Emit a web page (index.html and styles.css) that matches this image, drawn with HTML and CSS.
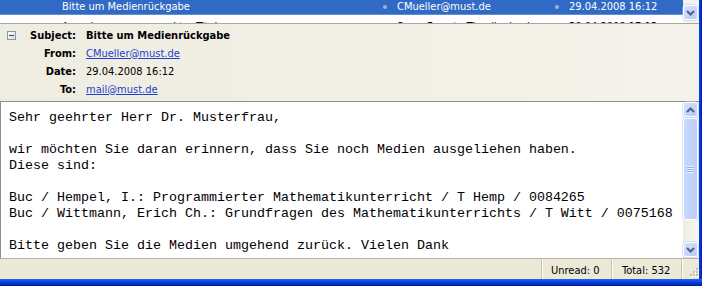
FILE: index.html
```html
<!DOCTYPE html>
<html>
<head>
<meta charset="utf-8">
<link rel="stylesheet" href="styles.css">
</head>
<body>
<div class="window">
  <div class="upper">
    <div class="main">
      <div class="list">
        <div class="rows">
          <div class="row selected">
            <span class="c-icon"></span>
            <span class="c-subj">Bitte um Medienrückgabe</span>
            <span class="c-dot"><i class="dot"></i></span>
            <span class="c-from">CMueller@must.de</span>
            <span class="c-dot"><i class="dot"></i></span>
            <span class="c-date">29.04.2008 16:12</span>
          </div>
          <div class="row next">
            <span class="c-icon"><i class="ring"></i></span>
            <span class="c-subj">Anmahnung vorgemerkter Titel</span>
            <span class="c-dot"></span>
            <span class="c-from">Swen Fuerste Tlandlnebach</span>
            <span class="c-dot"></span>
            <span class="c-date">30.04.2008 17:13</span>
          </div>
        </div>
        <div class="vscroll list-scroll">
          <div class="track"></div>
          <div class="sbtn"><svg width="9" height="6" viewBox="0 0 9 6"><polyline points="1,1 4.5,4.5 8,1" fill="none" stroke="#4D6185" stroke-width="2"/></svg></div>
        </div>
      </div>

      <div class="header">
        <div class="hdr-row">
          <span class="hdr-icon"><span class="collapse"></span></span>
          <span class="lbl">Subject:</span>
          <span class="val subj">Bitte um Medienrückgabe</span>
        </div>
        <div class="hdr-row">
          <span class="hdr-icon"></span>
          <span class="lbl">From:</span>
          <span class="val"><a class="link">CMueller@must.de</a></span>
        </div>
        <div class="hdr-row">
          <span class="hdr-icon"></span>
          <span class="lbl">Date:</span>
          <span class="val">29.04.2008 16:12</span>
        </div>
        <div class="hdr-row">
          <span class="hdr-icon"></span>
          <span class="lbl">To:</span>
          <span class="val"><a class="link">mail@must.de</a></span>
        </div>
      </div>

      <div class="reading">
        <div class="text">Sehr geehrter Herr Dr. Musterfrau,

wir möchten Sie daran erinnern, dass Sie noch Medien ausgeliehen haben.
Diese sind:

Buc / Hempel, I.: Programmierter Mathematikunterricht / T Hemp / 0084265
Buc / Wittmann, Erich Ch.: Grundfragen des Mathematikunterrichts / T Witt / 0075168

Bitte geben Sie die Medien umgehend zurück. Vielen Dank</div>
        <div class="vscroll">
          <div class="sbtn"><svg width="9" height="6" viewBox="0 0 9 6"><polyline points="1,5 4.5,1.5 8,5" fill="none" stroke="#4D6185" stroke-width="2"/></svg></div>
          <div class="thumb"><span class="grip"></span></div>
          <div class="track"></div>
          <div class="sbtn"><svg width="9" height="6" viewBox="0 0 9 6"><polyline points="1,1 4.5,4.5 8,1" fill="none" stroke="#4D6185" stroke-width="2"/></svg></div>
        </div>
      </div>

      <div class="status">
        <div class="panel wide"></div>
        <div class="panel unread">Unread: 0</div>
        <div class="panel total">Total: 532</div>
        <div class="grip-corner">
          <svg width="12" height="12" viewBox="0 0 12 12">
            <g fill="#FFFFFF">
              <rect x="10" y="2" width="2" height="2"/><rect x="7" y="5" width="2" height="2"/><rect x="10" y="5" width="2" height="2"/>
              <rect x="4" y="8" width="2" height="2"/><rect x="7" y="8" width="2" height="2"/><rect x="10" y="8" width="2" height="2"/>
            </g>
            <g fill="#C3BFAE">
              <rect x="9" y="1" width="2" height="2"/><rect x="6" y="4" width="2" height="2"/><rect x="9" y="4" width="2" height="2"/>
              <rect x="3" y="7" width="2" height="2"/><rect x="6" y="7" width="2" height="2"/><rect x="9" y="7" width="2" height="2"/>
            </g>
          </svg>
        </div>
      </div>
    </div>
    <div class="frame-right"></div>
  </div>
  <div class="frame-bottom"></div>
</div>
</body>
</html>
```

FILE: styles.css
```css
html, body {
  margin: 0;
  padding: 0;
  background: #ECE9D8;
}

.window {
  width: 702px;
  height: 286px;
  display: flex;
  flex-direction: column;
  overflow: hidden;
  font-family: "DejaVu Sans Condensed", "DejaVu Sans", sans-serif;
  font-size: 11px;
  color: #000;
}

.upper {
  flex: 1;
  display: flex;
  min-height: 0;
}

.main {
  flex: 1;
  display: flex;
  flex-direction: column;
  min-width: 0;
}

.frame-right {
  width: 3px;
  background: linear-gradient(to right, #0842DE, #0831D9 50%, #001EA0);
}

.frame-bottom {
  height: 7px;
  background: linear-gradient(to bottom, #1C6AF0, #0A4FE4 30%, #0831D9 60%, #001DA0);
}

/* message list */
.list {
  height: 23px;
  display: flex;
  background: #FFFFFF;
  border-bottom: 1px solid #ACA899;
  overflow: hidden;
}

.rows {
  flex: 1;
  min-width: 0;
  overflow: hidden;
}

.row {
  display: grid;
  grid-template-columns: 62px 316px 19px 153px 19px 1fr;
  height: 17px;
  line-height: 17px;
  white-space: nowrap;
  overflow: hidden;
}

.row.selected {
  margin-top: -2px;
  background: #316AC5;
  color: #FFFFFF;
  box-shadow: inset 0 -1px 0 0 rgba(255, 255, 255, 0.25);
}

.row.next {
  padding-top: 3px;
}

.c-dot {
  display: flex;
  align-items: center;
}

.dot {
  display: block;
  width: 4px;
  height: 4px;
  margin-left: 5px;
  border-radius: 50%;
  background: #9FB2D6;
}

.c-icon {
  display: flex;
  align-items: center;
}

.ring {
  display: block;
  width: 6px;
  height: 6px;
  margin-left: 29px;
  border: 1px solid #8C8C8C;
  border-radius: 50%;
}

/* scrollbars */
.vscroll {
  width: 16px;
  display: flex;
  flex-direction: column;
  background: #F4F3EE;
}

.list-scroll {
  padding-top: 2px;
}

.list-scroll .track {
  height: 3px;
  flex: 0 0 auto;
}

.track {
  flex: 1;
  background: linear-gradient(to right, #EEEDE5, #F8F8F4);
}

.sbtn {
  width: 15px;
  height: 15px;
  margin-bottom: 1px;
  box-sizing: border-box;
  border: 1px solid #FFFFFF;
  border-radius: 3px;
  background: linear-gradient(to bottom right, #D5E1FD, #B8CBF6);
  box-shadow: 0 0 0 0.5px #B0C4EF;
  display: flex;
  align-items: center;
  justify-content: center;
}

.thumb {
  width: 15px;
  height: 102px;
  box-sizing: border-box;
  border: 1px solid #FFFFFF;
  border-radius: 3px;
  background: linear-gradient(to right, #C9D8FC, #BCCDF8);
  box-shadow: 0 0 0 0.5px #B0C4EF;
  display: flex;
  align-items: center;
  justify-content: center;
}

.grip {
  display: block;
  width: 7px;
  height: 7px;
  background: repeating-linear-gradient(to bottom, #EEF4FE 0 1px, #8CB0F8 1px 2px);
}

/* header */
.header {
  height: 77px;
  box-sizing: border-box;
  padding-top: 2px;
  background: linear-gradient(to right, #EFEDE1, #F4F2EA);
}

.hdr-row {
  display: grid;
  grid-template-columns: 22px 54px 1fr;
  column-gap: 0;
  height: 18px;
  align-items: center;
}

.hdr-icon {
  display: flex;
  align-items: center;
}

.collapse {
  display: block;
  position: relative;
  width: 9px;
  height: 9px;
  margin-left: 7px;
  box-sizing: border-box;
  border: 1px solid #8C97A8;
  background: linear-gradient(135deg, #FFFFFF, #DCDAD0);
}

.collapse::after {
  content: "";
  position: absolute;
  left: 1px;
  top: 3px;
  width: 5px;
  height: 1px;
  background: #2B3B6B;
}

.lbl {
  font-weight: bold;
  text-align: right;
}

.val {
  padding-left: 10px;
  white-space: nowrap;
}

.val.subj {
  font-weight: bold;
}

.link {
  color: #1C3FCB;
  text-decoration: underline;
}

/* reading pane */
.reading {
  height: 158px;
  box-sizing: border-box;
  display: flex;
  background: #FFFFFF;
  border-top: 1px solid #8E8F8F;
  border-left: 1px solid #8E8F8F;
  border-bottom: 1px solid #B7B4A4;
}

.text {
  flex: 1;
  min-width: 0;
  padding: 8px 0 0 8px;
  font-family: "Liberation Mono", "Courier New", monospace;
  font-size: 13.333px;
  line-height: 16px;
  white-space: pre;
  overflow: hidden;
}

/* status bar */
.status {
  height: 20px;
  display: flex;
  align-items: stretch;
  background: #ECE9D8;
}

.panel {
  box-sizing: border-box;
  display: flex;
  align-items: center;
  border-right: 1px solid #C5C2B2;
  box-shadow: 1px 0 0 #FFFFFF;
  padding-top: 2px;
}

.panel.wide {
  flex: 1;
}

.unread {
  width: 70px;
  padding-left: 9px;
}

.total {
  width: 70px;
  padding-left: 10px;
}

.grip-corner {
  width: 17px;
  display: flex;
  align-items: flex-end;
  justify-content: flex-end;
}
```
